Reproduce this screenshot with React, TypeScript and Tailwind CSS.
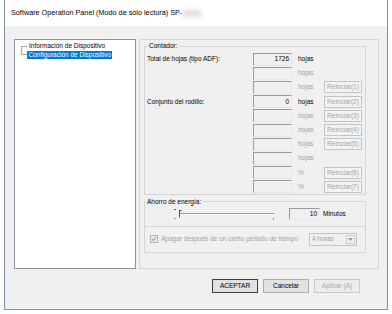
import React from "react";

type Row = {
  label?: string;
  value?: string;
  unit: string;
  active?: boolean;
  btn?: string;
};

const rows: Row[] = [
  { label: "Total de hojas (tipo ADF):", value: "1726", unit: "hojas", active: true },
  { unit: "hojas" },
  { unit: "hojas", btn: "Reinciar(1)" },
  { label: "Conjunto del rodillo:", value: "0", unit: "hojas", active: true, btn: "Reinciar(2)" },
  { unit: "hojas", btn: "Reinciar(3)" },
  { unit: "hojas", btn: "Reinciar(4)" },
  { unit: "hojas", btn: "Reinciar(5)" },
  { unit: "hojas" },
  { unit: "%", btn: "Reinciar(6)" },
  { unit: "%", btn: "Reinciar(7)" },
];

function TextBox({ value, className }: { value?: string; className: string }) {
  return (
    <div
      className={
        "flex items-center justify-end border border-[#9a9a9a] border-b-[#e6e6e6] border-r-[#e6e6e6] bg-[#f0f0f0] pr-[2px] text-black " +
        className
      }
    >
      {value}
    </div>
  );
}

function CounterRow({ row }: { row: Row }) {
  return (
    <div className="flex h-[14.2px] items-center">
      <div className="w-[106px] text-black">{row.label}</div>
      <TextBox value={row.value} className="h-[13px] w-[39px]" />
      <div
        className={
          "ml-[6px] w-[26px] " + (row.active ? "text-black" : "text-[#a3a3a3]")
        }
      >
        {row.unit}
      </div>
      {row.btn && (
        <div className="flex h-[12px] w-[38px] items-center justify-center border border-[#c4c4c4] bg-[#f3f3f3] text-[#a3a3a3]">
          {row.btn}
        </div>
      )}
    </div>
  );
}

export default function App() {
  return (
    <div className="h-[314px] w-[392px] bg-white px-[4px] font-['Liberation_Sans',Arial,sans-serif] text-[6.5px] leading-[8px]">
      <div className="flex flex-col border-x border-b border-[#7f93a8]">
        {/* Title bar */}
        <div className="flex h-[26px] items-center bg-white pl-[6px] text-[7.25px] text-black">
          <span>Software Operation Panel (Modo de sólo lectura) SP-</span>
          <span className="ml-[1px] h-[7px] w-[18px] bg-[#dedede] blur-[2px]" />
        </div>

        {/* Body */}
        <div className="flex flex-col bg-[#f0f0f0] pb-[16px] pl-[9px] pr-[8px] pt-[13px]">
          <div className="flex gap-[3px]">
            {/* Tree */}
            <div className="flex w-[122px] border border-[#8f949b] bg-white pl-[6px] pt-[2px]">
              <div className="flex items-start">
                <svg width="6" height="17" viewBox="0 0 6 17" className="mt-[0px]">
                  <path d="M0.5 4.5H6M0.5 4.5V12.5H6" stroke="#a5a5a5" strokeWidth="1" fill="none" />
                </svg>
                <div className="flex flex-col items-start">
                  <div className="flex h-[8.5px] items-center pl-[2px] text-black">
                    Información de Dispositivo
                  </div>
                  <div className="flex h-[8.5px] items-center bg-[#0078d7] px-[1.5px] text-white">
                    Configuración de Dispositivo
                  </div>
                </div>
              </div>
            </div>

            {/* Settings panel */}
            <div className="flex h-[230px] flex-1 flex-col border border-[#d5d5d5] pl-[4px] pr-[12px] pt-[2px]">
              <fieldset className="border border-[#d5d5d5] pb-[0px] pl-[2px] pt-[2px]">
                <legend className="ml-[1px] px-[1px] text-black">Contador:</legend>
                <div className="flex flex-col">
                  {rows.map((r, i) => (
                    <CounterRow key={i} row={r} />
                  ))}
                </div>
              </fieldset>

              <fieldset className="mt-[3px] border border-[#d5d5d5]">
                <legend className="ml-[1px] px-[1px] text-black">Ahorro de energía:</legend>
                <div className="flex h-[20px] items-center pb-[4px] pl-[27px]">
                  <svg width="104" height="14" viewBox="0 0 104 14">
                    <path d="M2 2.5H4M2 11.5H3.5M101.5 11V12.5" stroke="#6e6e6e" strokeWidth="1" />
                    <path d="M8 6.5H102" stroke="#9a9a9a" strokeWidth="1" />
                    <path d="M8 7.5H102" stroke="#ffffff" strokeWidth="1" />
                    <path d="M7.5 3V10.5M7.5 3.5H9.5" stroke="#4a4a4a" strokeWidth="1" fill="none" />
                  </svg>
                  <TextBox value="10" className="ml-[13px] h-[12px] w-[31px]" />
                  <span className="ml-[3px] text-black">Minutos</span>
                </div>
                <div className="flex h-[26px] items-center border-t border-[#d5d5d5] pl-[5px] pr-[8px]">
                  <div className="flex h-[8px] w-[8px] items-center justify-center border border-[#b4b4b4] bg-[#f0f0f0]">
                    <svg width="6" height="6" viewBox="0 0 6 6">
                      <path d="M0.8 3L2.3 4.6L5.2 1.2" stroke="#a0a0a0" strokeWidth="1.1" fill="none" />
                    </svg>
                  </div>
                  <span className="ml-[3px] text-[#a3a3a3]">
                    Apagar después de un cierto periodo de tiempo
                  </span>
                  <div className="ml-auto flex h-[13px] w-[48px] items-stretch border border-[#c4c4c4] bg-[#f0f0f0]">
                    <span className="flex flex-1 items-center pl-[2px] text-[#a3a3a3]">4 horas</span>
                    <span className="m-[1px] flex w-[9px] items-center justify-center border border-[#d0d0d0]">
                      <svg width="5" height="3" viewBox="0 0 5 3">
                        <path d="M0 0H5L2.5 3Z" fill="#a0a0a0" />
                      </svg>
                    </span>
                  </div>
                </div>
              </fieldset>
            </div>
          </div>

          {/* Buttons */}
          <div className="mt-[10px] flex justify-end gap-[5px] pr-[19px]">
            <div className="flex h-[14px] w-[46px] items-center justify-center border border-[#3f3f3f] bg-[#e1e1e1] text-black">
              ACEPTAR
            </div>
            <div className="flex h-[14px] w-[46px] items-center justify-center border border-[#adadad] bg-[#e1e1e1] text-black">
              Cancelar
            </div>
            <div className="flex h-[14px] w-[46px] items-center justify-center border border-[#cacaca] bg-[#ececec] text-[#a8a8a8]">
              Aplicar (A)
            </div>
          </div>
        </div>
      </div>
    </div>
  );
}
